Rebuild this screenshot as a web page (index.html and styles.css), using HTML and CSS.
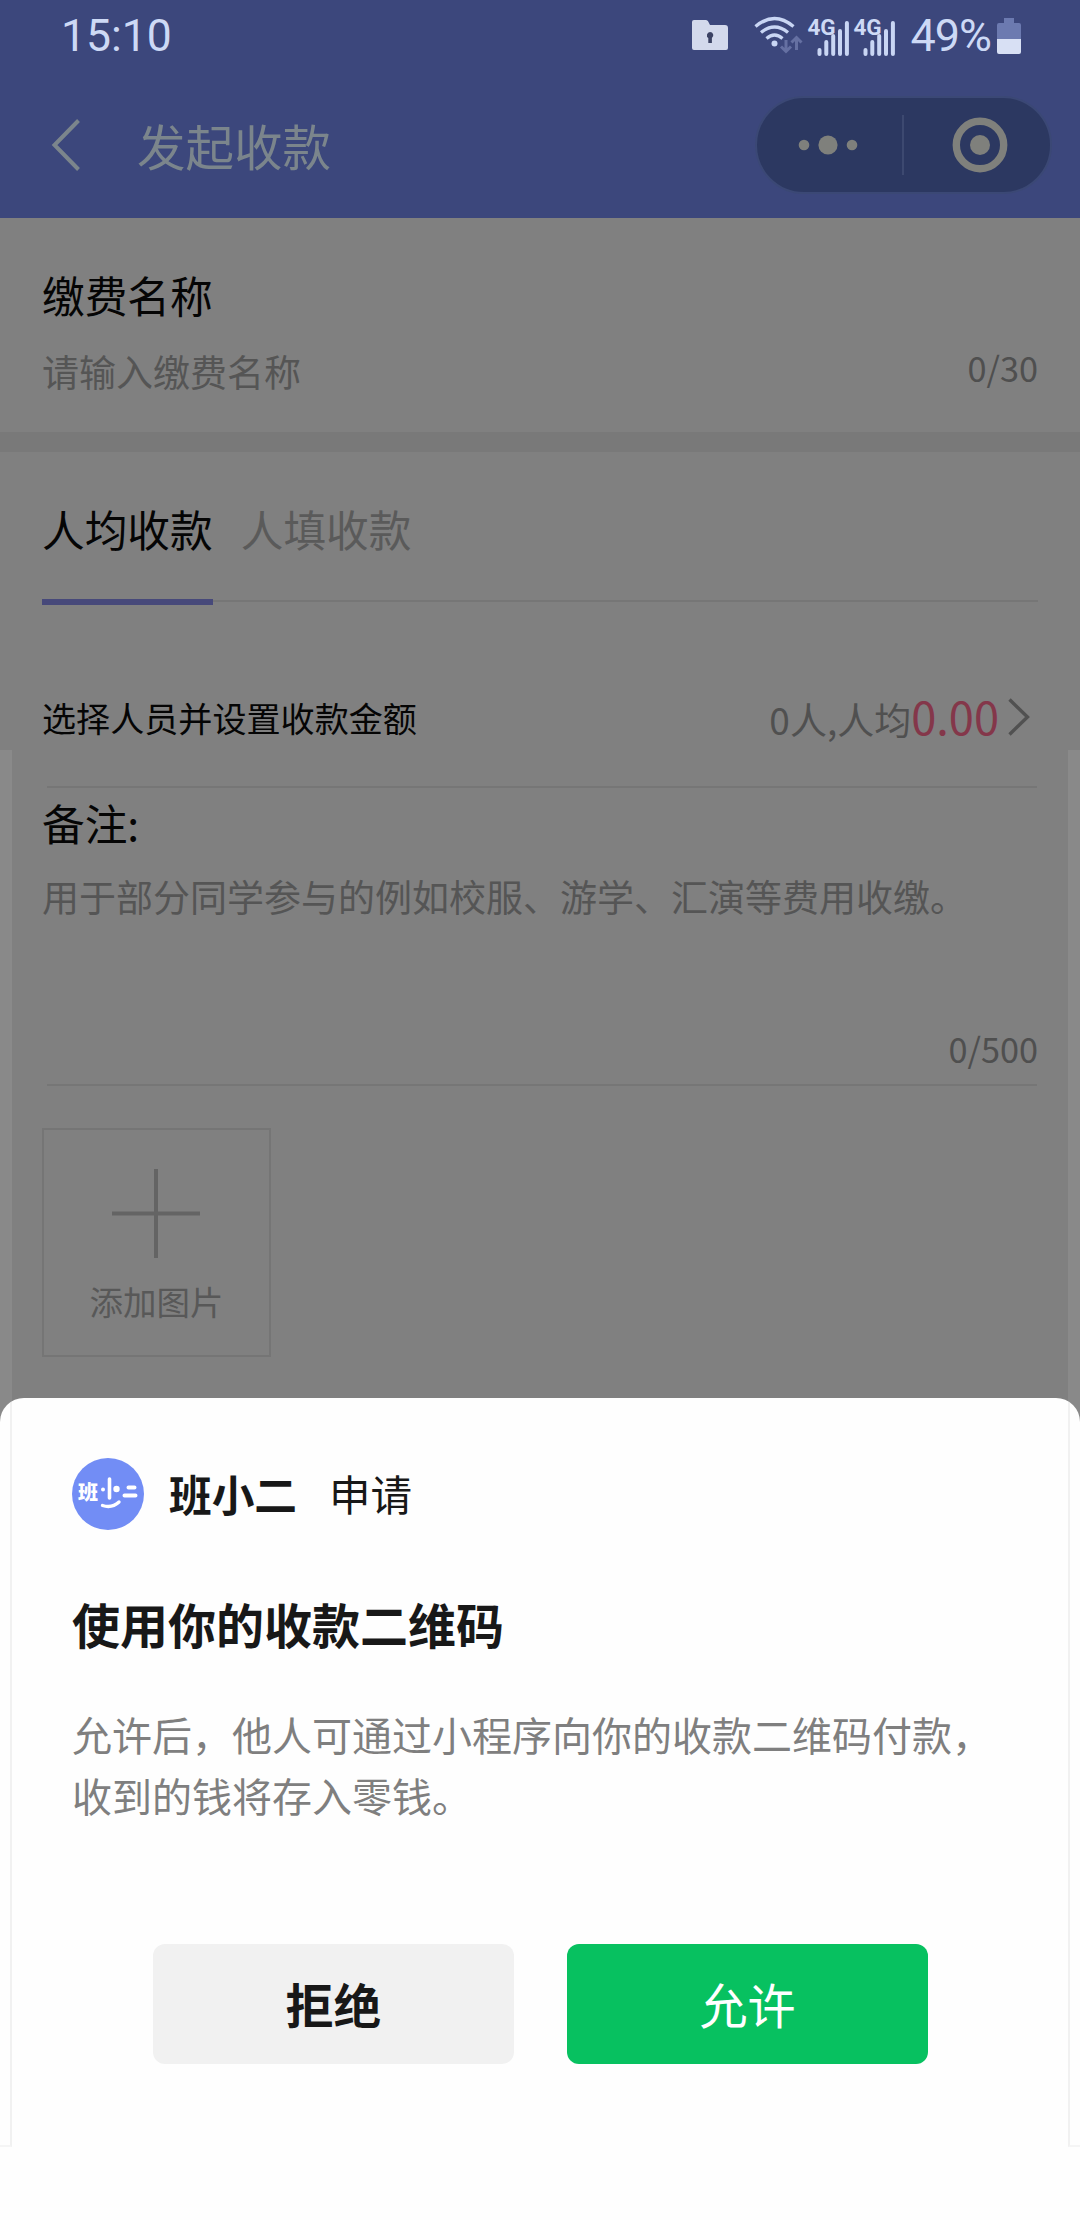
FILE: index.html
```html
<!DOCTYPE html>
<html lang="zh-CN">
<head>
<meta charset="utf-8">
<title>发起收款</title>
<link rel="stylesheet" href="styles.css">
</head>
<body>
<div class="screen">
  <header class="header">
    <div class="status">
      <span class="clock">15:10</span>
      <div class="status-right">
        <svg class="folder" width="38" height="40" viewBox="0 0 38 40"><path d="M3 4h12q1.500 0 2.200 1.500l1.800 3.500h15q3 0 3 3v20q0 2-2 2H3q-2 0-2-2V6q0-2 2-2z" fill="#d3d9ec"/><path d="M19 16a3.300 3.300 0 0 0-1.700 6v5h3.600v-5A3.300 3.300 0 0 0 19 16z" fill="#3b4264"/></svg>
        <svg class="wifi" width="50" height="40" viewBox="0 0 50 40"><g fill="none" stroke="#c9d6f4" stroke-width="3.300"><path d="M1.500 10.500q19-16 38 0"/><path d="M7 16.500q13.500-11 27 0"/><path d="M12.500 22.500q8-7 16 0"/></g><circle cx="20.500" cy="27.500" r="3" fill="#c9d6f4"/><g fill="none" stroke="#6570a2" stroke-width="3"><path d="M32 24v10M27 30.500l5 5 5-5M42.500 34V22M37.500 26.500l5-5 5 5"/></g></svg>
        <div class="signal"><span class="net">4G</span><svg width="40" height="40" viewBox="0 0 40 40"><path d="M13 38v-4M19.800 38V26M26.700 38V20M33.500 38V15M40.400 38V7" transform="translate(-2.500 0)" stroke="#c9d6f4" stroke-width="4" stroke-linecap="round"/></svg></div>
        <div class="signal"><span class="net">4G</span><svg width="40" height="40" viewBox="0 0 40 40"><path d="M13 38v-4M19.800 38V26M26.700 38V20M33.500 38V15M40.400 38V7" transform="translate(-2.500 0)" stroke="#c9d6f4" stroke-width="4" stroke-linecap="round"/></svg></div>
        <span class="percent">49%</span>
        <svg class="battery" width="24" height="38" viewBox="0 0 24 38"><path d="M7 1h10v5h5q2 0 2 2v14H0V8q0-2 2-2h5z" fill="#6c7ab0"/><path d="M0 22h24v13q0 2-2 2H2q-2 0-2-2z" fill="#d8e0f4"/></svg>
      </div>
    </div>
    <nav class="nav">
      <svg class="back" width="32" height="56" viewBox="0 0 32 56"><path d="M29.500 3.500L5.500 28l24 24.500" fill="none" stroke="#7b858c" stroke-width="4"/></svg>
      <h1 class="nav-title">发起收款</h1>
      <div class="capsule">
        <svg class="dots" width="60" height="24" viewBox="0 0 60 24" fill="#7f807c"><circle cx="6" cy="12" r="5.300"/><circle cx="30" cy="12" r="9.600"/><circle cx="54" cy="12" r="5.300"/></svg>
        <i class="capsule-line"></i>
        <svg class="target" width="56" height="56" viewBox="0 0 56 56"><circle cx="28" cy="28" r="23.700" fill="none" stroke="#7f807c" stroke-width="7.400"/><circle cx="28" cy="28" r="10" fill="#7f807c"/></svg>
      </div>
    </nav>
  </header>

  <main class="form">
    <section class="name-field">
      <div class="label">缴费名称</div>
      <div class="input-row"><span class="placeholder">请输入缴费名称</span><span class="counter">0/30</span></div>
    </section>
    <div class="band"></div>
    <div class="tabs"><div class="tab tab-on">人均收款</div><div class="tab">人填收款</div></div>
    <section class="people">
      <span class="people-label">选择人员并设置收款金额</span>
      <span class="people-value">0人,人均<span class="amount">0.00</span></span>
      <svg class="chevron" width="24" height="40" viewBox="0 0 24 40"><path d="M2.500 2.500L20.500 20l-18 17.500" fill="none" stroke="#515151" stroke-width="3.400"/></svg>
    </section>
    <div class="rule"></div>
    <section class="note">
      <div class="label">备注:</div>
      <div class="placeholder note-text">用于部分同学参与的例如校服、游学、汇演等费用收缴。</div>
      <div class="counter note-counter">0/500</div>
    </section>
    <div class="rule"></div>
    <div class="add-photo">
      <svg width="92" height="92" viewBox="0 0 92 92"><path d="M45 2v89M1 46.500h88" stroke="#646464" stroke-width="4"/></svg>
      <span>添加图片</span>
    </div>
  </main>

  <section class="sheet">
    <div class="applicant">
      <div class="logo"><span class="logo-text">班</span><svg width="72" height="72" viewBox="0 0 72 72" fill="none" stroke="#fff" stroke-linecap="round"><path d="M37.500 21v19" stroke-width="3.600"/><path d="M56.500 29.500h6M52.500 37.500h11" stroke-width="4"/><path d="M30.500 47.500q9.500 3 16.500-3.500" stroke-width="3.400"/><circle cx="31" cy="31.500" r="2" fill="#fff" stroke="none"/><circle cx="44.500" cy="31" r="3.200" fill="#fff" stroke="none"/></svg></div>
      <span class="app-name">班小二</span>
      <span class="app-ask">申请</span>
    </div>
    <h2 class="sheet-title">使用你的收款二维码</h2>
    <p class="sheet-desc">允许后，他人可通过小程序向你的收款二维码付款，<br>收到的钱将存入零钱。</p>
    <div class="actions"><button class="btn deny">拒绝</button><button class="btn allow">允许</button></div>
  </section>
  <i class="edge edge-left"></i>
  <i class="edge edge-right"></i>
</div>
</body>
</html>
```
FILE: styles.css
```css
* { box-sizing: border-box; }
body {
  margin: 0;
  background: #808080;
  font-family: "Noto Sans CJK SC", sans-serif;
}
h1, h2, p { margin: 0; font-weight: 400; }
svg { display: block; flex: none; }
.screen {
  position: relative;
  width: 1080px;
  height: 2220px;
  overflow: hidden;
  display: flex;
  flex-direction: column;
}

/* header */
.header { height: 218px; background: #3c477c; flex: none; }
.status {
  height: 72px;
  padding: 0 59px 0 61px;
  display: flex;
  align-items: center;
  justify-content: space-between;
  font-family: Roboto, sans-serif;
  color: #cdd9f5;
}
.clock, .percent { font-size: 45px; line-height: 74px; }
.clock { font-size: 44.5px; }
.status-right { display: flex; align-items: center; }
.wifi { margin-left: 25px; }
.signal {
  position: relative;
  width: 40px;
  margin-left: 5px;
}
.signal + .signal { margin-left: 6px; }
.net {
  position: absolute;
  left: -2px;
  top: 0;
  font-size: 22.5px;
  line-height: 22px;
  font-weight: 700;
}
.percent { margin-left: 15px; letter-spacing: -1px; }
.battery { margin-left: 6px; }
.nav {
  height: 146px;
  padding: 0 28px 0 49px;
  display: flex;
  align-items: center;
}
.nav-title {
  margin-left: 56px;
  font-size: 48.5px;
  line-height: 60px;
  color: #7b858c;
}
.capsule {
  width: 297px;
  height: 98px;
  margin-left: auto;
  padding: 0 42px;
  display: flex;
  align-items: center;
  border: 2px solid #3b4875;
  border-radius: 49px;
  background: #2c3861;
}
.dots { margin-left: -1px; }
.capsule-line { width: 2px; height: 60px; margin-left: 44px; background: #3d4970; }
.target { margin-left: 48px; }

/* form */
.form { height: 1180px; flex: none; }
.label { font-size: 42.7px; line-height: 60px; color: #050505; }
.placeholder { font-size: 37px; line-height: 60px; color: #555; }
.counter { font-size: 34.3px; line-height: 52px; color: #4f4f4f; }
.name-field { height: 214px; padding: 46px 42px 0; }
.input-row {
  margin-top: 17px;
  display: flex;
  justify-content: space-between;
  align-items: flex-start;
}
.band { height: 20px; background: #797979; }
.tabs {
  height: 150px;
  margin: 0 42px;
  display: flex;
  gap: 28px;
  border-bottom: 2px solid #767676;
}
.tab {
  height: 153px;
  padding-top: 46px;
  font-size: 42.7px;
  line-height: 60px;
  color: #5a5a5a;
}
.tab-on { color: #050505; border-bottom: 6px solid #47497a; }
.people {
  height: 184px;
  padding: 46px 49px 0 42px;
  display: flex;
  align-items: center;
}
.people-label { font-size: 34.1px; color: #050505; }
.people-value { margin-left: auto; font-size: 37px; line-height: 60px; color: #505050; }
.amount { font-size: 45.2px; line-height: 60px; color: #84374a; }
.chevron { margin-left: 8px; }
.rule { height: 2px; margin: 0 43px 0 47px; background: #767676; }
.note { height: 296px; padding: 4px 42px 0; }
.note-text { margin-top: 14px; }
.note-counter { margin-top: 96px; text-align: right; }
.add-photo {
  width: 229px;
  height: 229px;
  margin: 42px 0 0 42px;
  padding-top: 37px;
  display: flex;
  flex-direction: column;
  align-items: center;
  border: 2px solid #757575;
  font-size: 33.5px;
  line-height: 50px;
  color: #585858;
}
.add-photo span { margin-top: 17px; }

/* authorisation sheet */
.sheet {
  flex: 1;
  padding: 60px 72px 0;
  border-radius: 24px 24px 0 0;
  background: #fefefe;
  color: #181818;
}
.applicant { display: flex; align-items: center; height: 72px; }
.logo {
  position: relative;
  width: 72px;
  height: 72px;
  border-radius: 50%;
  background: #728df5;
}
.logo-text {
  position: absolute;
  left: 6px;
  top: 22px;
  font-size: 20px;
  line-height: 24px;
  font-weight: 900;
  color: #fff;
}
.app-name { margin: -3px 0 0 25px; font-size: 42.7px; line-height: 68px; font-weight: 700; }
.app-ask { margin: -3px 0 0 32px; font-size: 41.5px; line-height: 68px; }
.sheet-title {
  margin-top: 58px;
  font-size: 48px;
  line-height: 70px;
  font-weight: 700;
}
.sheet-desc {
  margin-top: 46px;
  font-size: 40px;
  line-height: 61px;
  color: #7f7f7f;
  white-space: nowrap;
}
.actions { display: flex; gap: 53px; margin: 118px 0 0 81px; }
.btn {
  width: 361px;
  height: 120px;
  padding: 0 0 2px;
  border: 0;
  border-radius: 12px;
  font-family: inherit;
  font-size: 48px;
  line-height: 118px;
}
.deny { background: #f1f1f1; color: #181818; font-weight: 700; }
.allow { background: #07c160; color: #fff; }

/* translucent edge strips laid over the page */
.edge {
  position: absolute;
  top: 750px;
  width: 12px;
  height: 1397px;
  background: rgba(255, 255, 255, 0.07);
  border-bottom: 2px solid rgba(200, 200, 200, 0.15);
}
.edge-left { left: 0; border-right: 2px solid rgba(150, 150, 150, 0.12); }
.edge-right { right: 0; border-left: 2px solid rgba(150, 150, 150, 0.12); }
```
